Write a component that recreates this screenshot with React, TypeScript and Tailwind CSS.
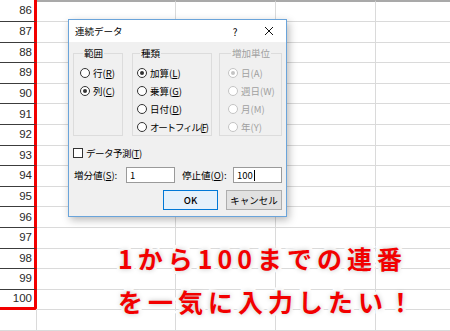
import type { ReactNode } from "react";

const rows = [86, 87, 88, 89, 90, 91, 92, 93, 94, 95, 96, 97, 98, 99, 100];

function Radio({ checked, disabled }: { checked?: boolean; disabled?: boolean }) {
  return (
    <span
      className={`flex h-[10px] w-[10px] shrink-0 items-center justify-center rounded-full border bg-white ${
        disabled ? "border-[#c4c4c4] bg-[#f0f0f0]" : "border-[#333]"
      }`}
    >
      {checked && (
        <span className={`h-[4px] w-[4px] rounded-full ${disabled ? "bg-[#c4c4c4]" : "bg-[#333]"}`} />
      )}
    </span>
  );
}

function Option({
  label,
  keyChar,
  checked,
  disabled,
  narrow,
}: {
  label: string;
  keyChar: string;
  checked?: boolean;
  disabled?: boolean;
  narrow?: boolean;
}) {
  return (
    <div
      className={`flex h-[18px] items-center gap-[3px] whitespace-nowrap ${disabled ? "text-[#a0a0a0]" : "text-black"}`}
    >
      <Radio checked={checked} disabled={disabled} />
      <span className={narrow ? "tracking-[-1.2px]" : ""}>
        {label}(<span className={disabled ? "" : "underline underline-offset-1"}>{keyChar}</span>)
      </span>
    </div>
  );
}

function Group({
  title,
  width,
  pad,
  disabled,
  children,
}: {
  title: string;
  width: string;
  pad: string;
  disabled?: boolean;
  children: ReactNode;
}) {
  return (
    <fieldset className={`${width} ${pad} h-[89px] border border-[#dcdcdc]`}>
      <legend className={`ml-[3px] px-[1px] leading-[12px] ${disabled ? "text-[#a0a0a0]" : "text-black"}`}>
        {title}
      </legend>
      <div className="mt-[5px] flex flex-col">{children}</div>
    </fieldset>
  );
}

function Dialog() {
  return (
    <div className="absolute left-[68px] top-[19px] w-[219px] border border-[#6aa4da] bg-[#f0f0f0] text-[9.5px] shadow-[2px_3px_8px_rgba(0,0,0,0.28)] [font-family:'Noto_Sans_CJK_JP',sans-serif]">
      <div className="flex h-[22px] items-center bg-white pl-[6px] pr-[5px]">
        <span className="flex-1 text-black">連続データ</span>
        <span className="w-[24px] text-center text-[10px] text-black">?</span>
        <span className="ml-[10px] flex w-[24px] justify-center">
          <svg width="10" height="10" viewBox="0 0 10 10">
            <path d="M1 1L9 9M9 1L1 9" stroke="#111" strokeWidth="1" />
          </svg>
        </span>
      </div>
      <div className="px-[4px] pb-[6px] pt-[5px]">
        <div className="flex">
          <Group title="範囲" width="w-[50px]" pad="pl-[6px]">
            <Option label="行" keyChar="R" />
            <Option label="列" keyChar="C" checked />
          </Group>
          <Group title="種類" width="ml-[9px] w-[80px]" pad="pl-[4px]">
            <Option label="加算" keyChar="L" checked />
            <Option label="乗算" keyChar="G" />
            <Option label="日付" keyChar="D" />
            <Option label="オートフィル" keyChar="F" narrow />
          </Group>
          <Group title="増加単位" width="ml-[7px] w-[63px]" pad="pl-[8px]" disabled>
            <Option label="日" keyChar="A" checked disabled />
            <Option label="週日" keyChar="W" disabled />
            <Option label="月" keyChar="M" disabled />
            <Option label="年" keyChar="Y" disabled />
          </Group>
        </div>
        <div className="mt-[9px] flex h-[16px] items-center gap-[3px]">
          <span className="h-[10px] w-[10px] border border-[#333] bg-white" />
          <span className="tracking-[-0.5px]">
            データ予測(<span className="underline underline-offset-1">T</span>)
          </span>
        </div>
        <div className="mt-[6px] flex h-[16px] items-center">
          <span className="w-[53px] pl-[1px]">
            増分値(<span className="underline underline-offset-1">S</span>):
          </span>
          <div className="flex h-[16px] w-[49px] items-center border border-[#9a9a9a] bg-white pl-[3px]">1</div>
          <span className="ml-[7px] w-[51px]">
            停止値(<span className="underline underline-offset-1">O</span>):
          </span>
          <div className="flex h-[16px] w-[49px] items-center border border-[#9a9a9a] bg-white pl-[3px]">
            100<span className="ml-[1px] h-[11px] w-px bg-black" />
          </div>
        </div>
        <div className="mt-[7px] flex justify-end gap-[8px]">
          <button className="h-[20px] w-[55px] border border-[#0078d7] bg-[#e5f1fb] font-medium text-black">
            OK
          </button>
          <button className="h-[20px] w-[56px] border border-[#adadad] bg-[#e1e1e1] text-black">キャンセル</button>
        </div>
      </div>
    </div>
  );
}

export default function App() {
  return (
    <div className="relative h-[331px] w-[450px] overflow-hidden bg-white">
      <div className="flex flex-col">
        {rows.map((n, i) => {
          const first = i === 0;
          const last = n === 100;
          return (
            <div key={n} className={`flex ${first ? "h-[22px]" : "h-[20.6px]"}`}>
              <div
                className={`flex w-[37px] items-center justify-end border-r-[3px] border-r-[#f20000] pr-[2px] text-[11.5px] text-[#2a2a2a] [font-family:'Liberation_Sans',Arial,sans-serif] ${
                  last ? "rounded-br-[3px] border-b-[3px] border-b-[#f20000]" : "border-b border-b-[#3c3c3c]"
                }`}
              >
                {n}
              </div>
              <div className={`w-[139px] border-b border-r border-[#dadada] ${first ? "border-t-2 border-t-[#a9a9a9]" : ""}`} />
              <div className={`w-[100px] border-b border-r border-[#dadada] ${first ? "border-t-2 border-t-[#a9a9a9]" : ""}`} />
              <div className={`w-[100px] border-b border-r border-[#dadada] ${first ? "border-t-2 border-t-[#a9a9a9]" : ""}`} />
              <div className={`flex-1 border-b border-[#dadada] ${first ? "border-t-2 border-t-[#a9a9a9]" : ""}`} />
            </div>
          );
        })}
        <div className="flex h-[20.6px]">
          <div className="w-[37px] border-b border-r border-[#dadada]" />
          <div className="w-[139px] border-b border-r border-[#dadada]" />
          <div className="w-[100px] border-b border-r border-[#dadada]" />
          <div className="w-[100px] border-b border-r border-[#dadada]" />
          <div className="flex-1 border-b border-[#dadada]" />
        </div>
      </div>

      <Dialog />

      <div className="absolute left-[118px] top-[237px] text-[25px] font-bold leading-[43px] tracking-[5px] text-[#f20000] [-webkit-text-stroke:6px_white] [paint-order:stroke_fill] [text-shadow:0_0_5px_rgba(0,0,0,0.25)] [font-family:'Noto_Sans_CJK_JP',sans-serif]">
        <div>1から100までの連番</div>
        <div>を一気に入力したい！</div>
      </div>
    </div>
  );
}
